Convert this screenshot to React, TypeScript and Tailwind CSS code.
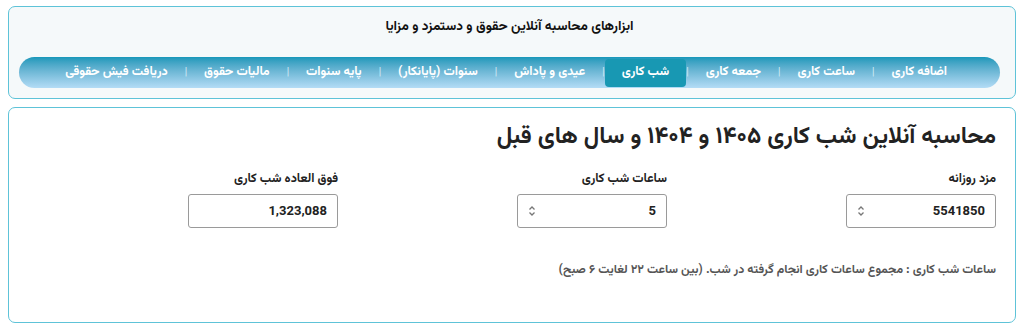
import React from 'react';

const tabs = [
  'اضافه کاری',
  'ساعت کاری',
  'جمعه کاری',
  'شب کاری',
  'عیدی و پاداش',
  'سنوات (پایانکار)',
  'پایه سنوات',
  'مالیات حقوق',
  'دریافت فیش حقوقی',
];

const Spinner = () => (
  <svg width="8" height="12" viewBox="0 0 8 12" fill="none" stroke="#777" strokeWidth="1.3">
    <path d="M1.5 4.5 L4 2 L6.5 4.5" />
    <path d="M1.5 7.5 L4 10 L6.5 7.5" />
  </svg>
);

interface FieldProps {
  label: string;
  value: string;
  spin?: boolean;
}

const Field: React.FC<FieldProps> = ({ label, value, spin = true }) => (
  <div className="flex flex-col items-start">
    <label className="text-[12.5px] font-bold text-[#222] mb-[6px] leading-[18px]">{label}</label>
    <div className="w-[150px] h-[34px] border border-[#9a9a9a] rounded-[3px] bg-white flex items-center justify-between px-[10px]">
      <span className="text-[13px] font-bold text-[#222] font-['Roboto',sans-serif]">{value}</span>
      {spin && <Spinner />}
    </div>
  </div>
);

export default function App() {
  return (
    <div dir="rtl" className="w-[1024px] h-[325px] bg-white pt-[6px] px-[8px] font-['Vazirmatn','DejaVu_Sans',sans-serif]">
      {/* Tools header */}
      <div className="h-[93px] border border-[#5ec3d8] rounded-[7px] bg-[#f5f9fa] pr-[15px] pl-[10px] pt-[10px]">
        <h2 className="text-center text-[13.5px] font-bold text-[#111] leading-[20px]">
          ابزارهای محاسبه آنلاین حقوق و دستمزد و مزایا
        </h2>
        <nav className="mt-[20px] h-[31px] rounded-full bg-gradient-to-b from-[#1598ba] to-[#b3dcf6] flex items-center pr-[36px] pl-[14px] whitespace-nowrap">
          {tabs.map((t, i) => (
            <React.Fragment key={t}>
              {i > 0 && <span className="text-[#d6eef7] text-[10px] shrink-0">|</span>}
              <span
                className={
                  t === 'شب کاری'
                    ? 'h-[28px] px-[17px] flex items-center rounded-[4px] bg-[#1898b3] text-white text-[12.5px] font-bold shrink-0'
                    : 'px-[17px] text-white text-[12.5px] font-bold shrink-0'
                }
              >
                {t}
              </span>
            </React.Fragment>
          ))}
        </nav>
      </div>

      {/* Calculator */}
      <div className="mt-[8px] h-[216px] border border-[#5ec3d8] rounded-[7px] bg-white pr-[19px] pt-[12px]">
        <h1 className="text-[23.5px] font-bold text-[#222] leading-[36px]">
          محاسبه آنلاین شب کاری ۱۴۰۵ و ۱۴۰۴ و سال های قبل
        </h1>
        <div className="mt-[14px] grid grid-cols-[329px_329px_329px]">
          <Field label="مزد روزانه" value="5541850" />
          <Field label="ساعات شب کاری" value="5" />
          <Field label="فوق العاده شب کاری" value="1,323,088" spin={false} />
        </div>
        <p className="mt-[33px] text-[12.2px] font-bold text-[#555]">
          ساعات شب کاری : مجموع ساعات کاری انجام گرفته در شب. (بین ساعت ۲۲ لغایت ۶ صبح)
        </p>
      </div>
    </div>
  );
}
